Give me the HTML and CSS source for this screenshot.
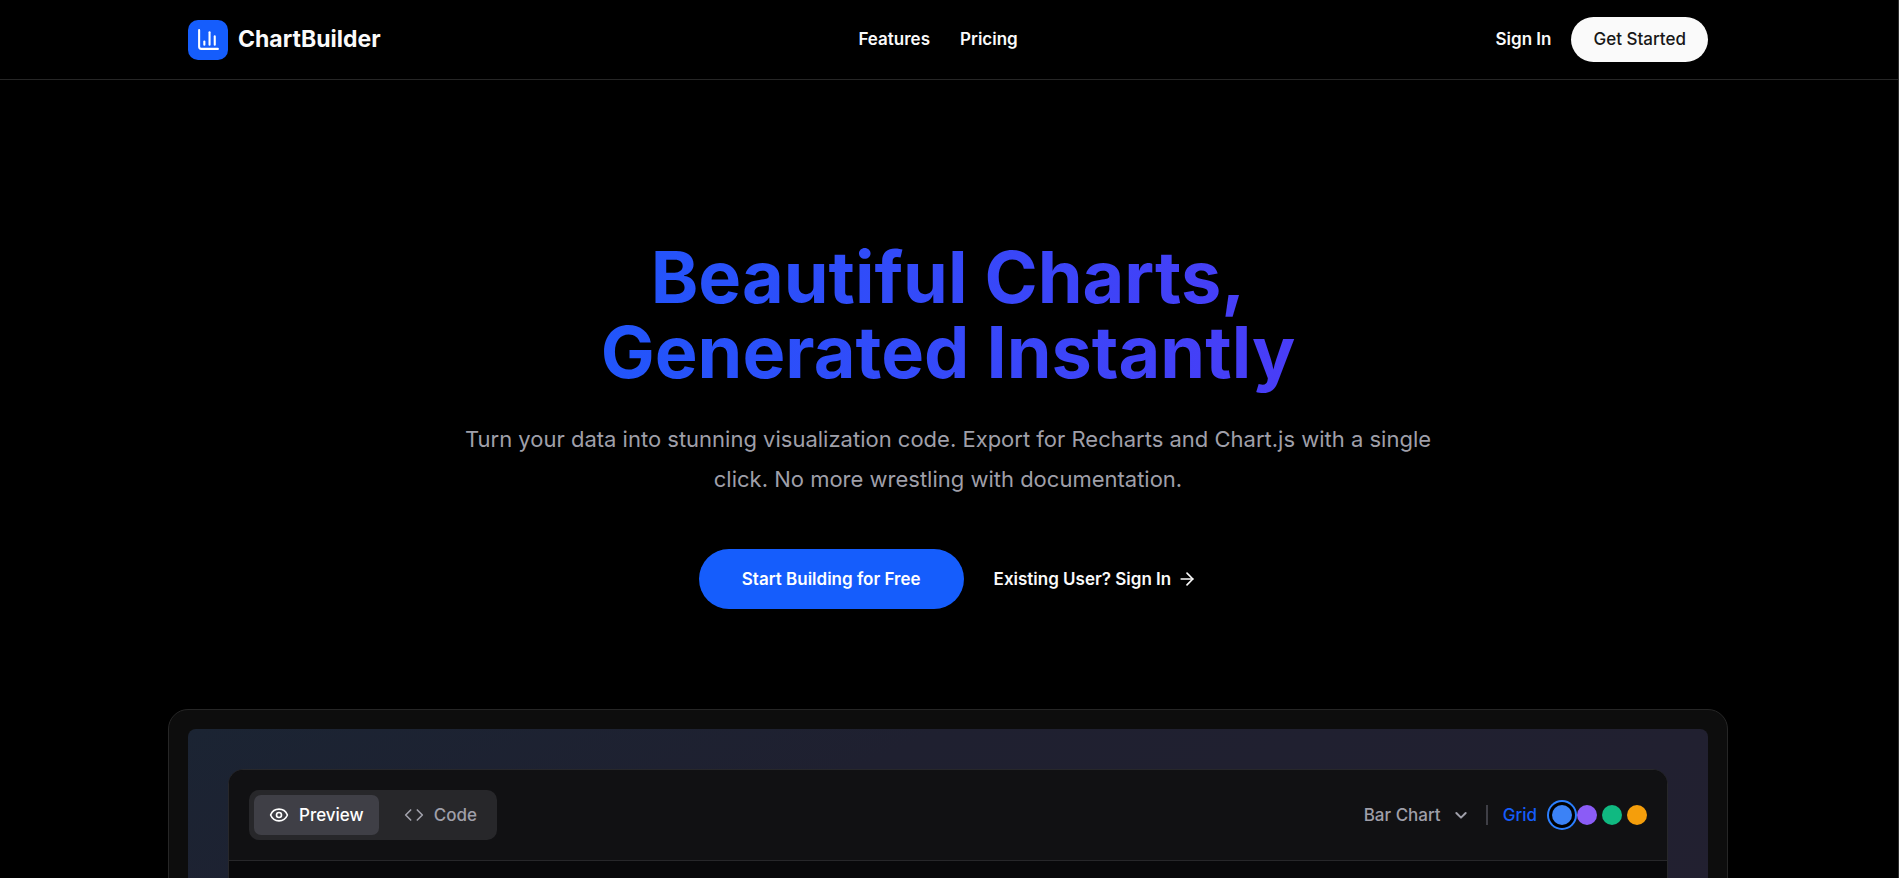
FILE: index.html
```html
<!DOCTYPE html>
<html lang="en">
<head>
  <meta charset="UTF-8" />
  <meta name="viewport" content="width=device-width, initial-scale=1" />
  <title>ChartBuilder</title>
  <link rel="stylesheet" href="styles.css">
</head>
<body>
  <header class="site-header">
    <div class="container header-row">
      <a class="brand" href="#">
        <span class="brand-mark">
          <svg width="25" height="25" viewBox="0 0 24 24" fill="none" stroke="currentColor" stroke-width="2" stroke-linecap="round" stroke-linejoin="round" aria-hidden="true">
            <path d="M3 3v16a2 2 0 0 0 2 2h16"/><path d="M18 17V9"/><path d="M13 17V5"/><path d="M8 17v-3"/>
          </svg>
        </span>
        ChartBuilder
      </a>
      <nav class="nav">
        <a href="#features">Features</a>
        <a href="#pricing">Pricing</a>
      </nav>
      <div class="account">
        <a href="#signin">Sign In</a>
        <a class="btn-light" href="#start">Get Started</a>
      </div>
    </div>
  </header>

  <main>
    <section class="hero">
      <h1>Beautiful Charts,<br>Generated Instantly</h1>
      <p>Turn your data into stunning visualization code. Export for Recharts and Chart.js with a single click. No more wrestling with documentation.</p>
      <div class="hero-actions">
        <a class="btn-primary" href="#start">Start Building for Free</a>
        <a class="signin-link" href="#signin">Existing User? Sign In
          <svg width="20" height="20" viewBox="0 0 24 24" fill="none" stroke="currentColor" stroke-width="2" stroke-linecap="round" stroke-linejoin="round" aria-hidden="true">
            <path d="M5 12h14"/><path d="m12 5 7 7-7 7"/>
          </svg>
        </a>
      </div>
    </section>

    <section class="demo">
      <div class="demo-backdrop">
        <div class="demo-window">
          <div class="toolbar">
            <div class="tabs">
              <button class="tab active" type="button">
                <svg width="20" height="20" viewBox="0 0 24 24" fill="none" stroke="currentColor" stroke-width="2" stroke-linecap="round" stroke-linejoin="round" aria-hidden="true">
                  <path d="M2.062 12.348a1 1 0 0 1 0-.696 10.75 10.75 0 0 1 19.876 0 1 1 0 0 1 0 .696 10.75 10.75 0 0 1-19.876 0"/><circle cx="12" cy="12" r="3"/>
                </svg>
                Preview
              </button>
              <button class="tab" type="button">
                <svg width="20" height="20" viewBox="0 0 24 24" fill="none" stroke="currentColor" stroke-width="2" stroke-linecap="round" stroke-linejoin="round" aria-hidden="true">
                  <path d="m16 18 6-6-6-6"/><path d="m8 6-6 6 6 6"/>
                </svg>
                Code
              </button>
            </div>
            <div class="options">
              <div class="select-wrap">
                <select class="chart-type" aria-label="Chart type">
                  <option>Bar Chart</option>
                </select>
                <svg width="16" height="16" viewBox="0 0 24 24" fill="none" stroke="currentColor" stroke-width="3" stroke-linecap="round" stroke-linejoin="round" aria-hidden="true">
                  <path d="m5 9 7 7 7-7"/>
                </svg>
              </div>
              <span class="divider"></span>
              <button class="grid-toggle" type="button">Grid</button>
              <div class="swatches">
                <button class="swatch blue selected" type="button" aria-label="Blue"></button>
                <button class="swatch violet" type="button" aria-label="Violet"></button>
                <button class="swatch green" type="button" aria-label="Green"></button>
                <button class="swatch amber" type="button" aria-label="Amber"></button>
              </div>
            </div>
          </div>
          <div class="canvas"></div>
        </div>
      </div>
    </section>
  </main>
</body>
</html>
```
FILE: styles.css
```css
* { box-sizing: border-box; }
html { background: #000; border-right: 1px solid #2e2e2e; scrollbar-width: none; }
body {
  margin: 0;
  background: #000; color: #fafafa;
  font-family: Inter, "Liberation Sans", sans-serif;
  font-size: 17px; line-height: 25px;
}
a { color: inherit; text-decoration: none; }
button, select { font: inherit; color: inherit; border: 0; background: none; padding: 0; cursor: pointer; }
svg { display: block; flex: none; }

.site-header { padding-right: 2px; border-bottom: 1px solid #262626; }
.container { max-width: 1600px; margin: 0 auto; padding: 0 40px; }
.header-row { display: flex; align-items: center; justify-content: space-between; height: 79px; }
.brand { display: flex; align-items: center; gap: 10px; font-size: 23px; font-weight: 700; }
.brand-mark {
  display: flex; align-items: center; justify-content: center;
  width: 40px; height: 40px; border-radius: 10px; background: #155dfc; color: #fff;
}
.nav { display: flex; gap: 30px; font-weight: 600; }
.account { display: flex; align-items: center; gap: 20px; font-weight: 600; }
.btn-light { padding: 10px 22px; border-radius: 25px; background: #fafafa; color: #171717; font-weight: 500; }

main { padding-right: 2px; }
.hero { max-width: 1120px; margin: 0 auto; padding: 159px 0 100px; text-align: center; }
.hero h1 {
  margin: 0; padding-bottom: 10px;
  font-size: 72px; line-height: 75px; font-weight: 700;
  background: linear-gradient(to right, #155dfc, #4f39f6 90%);
  -webkit-background-clip: text; background-clip: text; color: transparent;
}
.hero p { max-width: 1000px; margin: 20px auto 50px; font-size: 22px; line-height: 40px; color: #9f9fa9; }
.hero-actions { display: flex; align-items: center; justify-content: center; gap: 30px; font-weight: 600; }
.btn-primary { padding: 18px 43px 17px; border-radius: 30px; background: #155dfc; color: #fff; }
.signin-link { display: flex; align-items: center; gap: 6px; }

.demo {
  max-width: 1560px; margin: 0 auto; padding: 19px;
  border: 1px solid #262626; border-radius: 20px; background: #0d0d0d;
}
.demo-backdrop { padding: 40px; border-radius: 8px; background: linear-gradient(to bottom right, #1b2433, #1f2030 25%, #252030); }
.demo-window { overflow: hidden; border: 1px solid #27272a; border-radius: 15px; background: #09090b; }
.toolbar {
  display: flex; align-items: center; justify-content: space-between;
  padding: 20px; border-bottom: 1px solid #27272a; background: #111113;
}
.tabs { display: flex; gap: 10px; padding: 5px; border-radius: 10px; background: #27272a; }
.tab { display: flex; align-items: center; gap: 10px; height: 40px; padding: 0 15px; border-radius: 7px; color: #9f9fa9; font-weight: 500; }
.tab.active { background: #3f3f46; color: #fff; }
.options { display: flex; align-items: center; gap: 15px; color: #9f9fa9; font-weight: 500; }
.select-wrap { display: flex; align-items: center; gap: 12px; padding-right: 2px; }
.chart-type { appearance: none; }
.divider { width: 2px; height: 20px; background: #3f3f46; }
.grid-toggle { color: #155dfc; }
.swatches { display: flex; gap: 5px; }
.swatch { width: 20px; height: 20px; border-radius: 50%; }
.swatch.selected { box-shadow: 0 0 0 3px #000, 0 0 0 5px #2b7fff; }
.blue { background: #3b82f6; }
.violet { background: #8b5cf6; }
.green { background: #10b981; }
.amber { background: #f59e0b; }
.canvas { min-height: 500px; }
```
